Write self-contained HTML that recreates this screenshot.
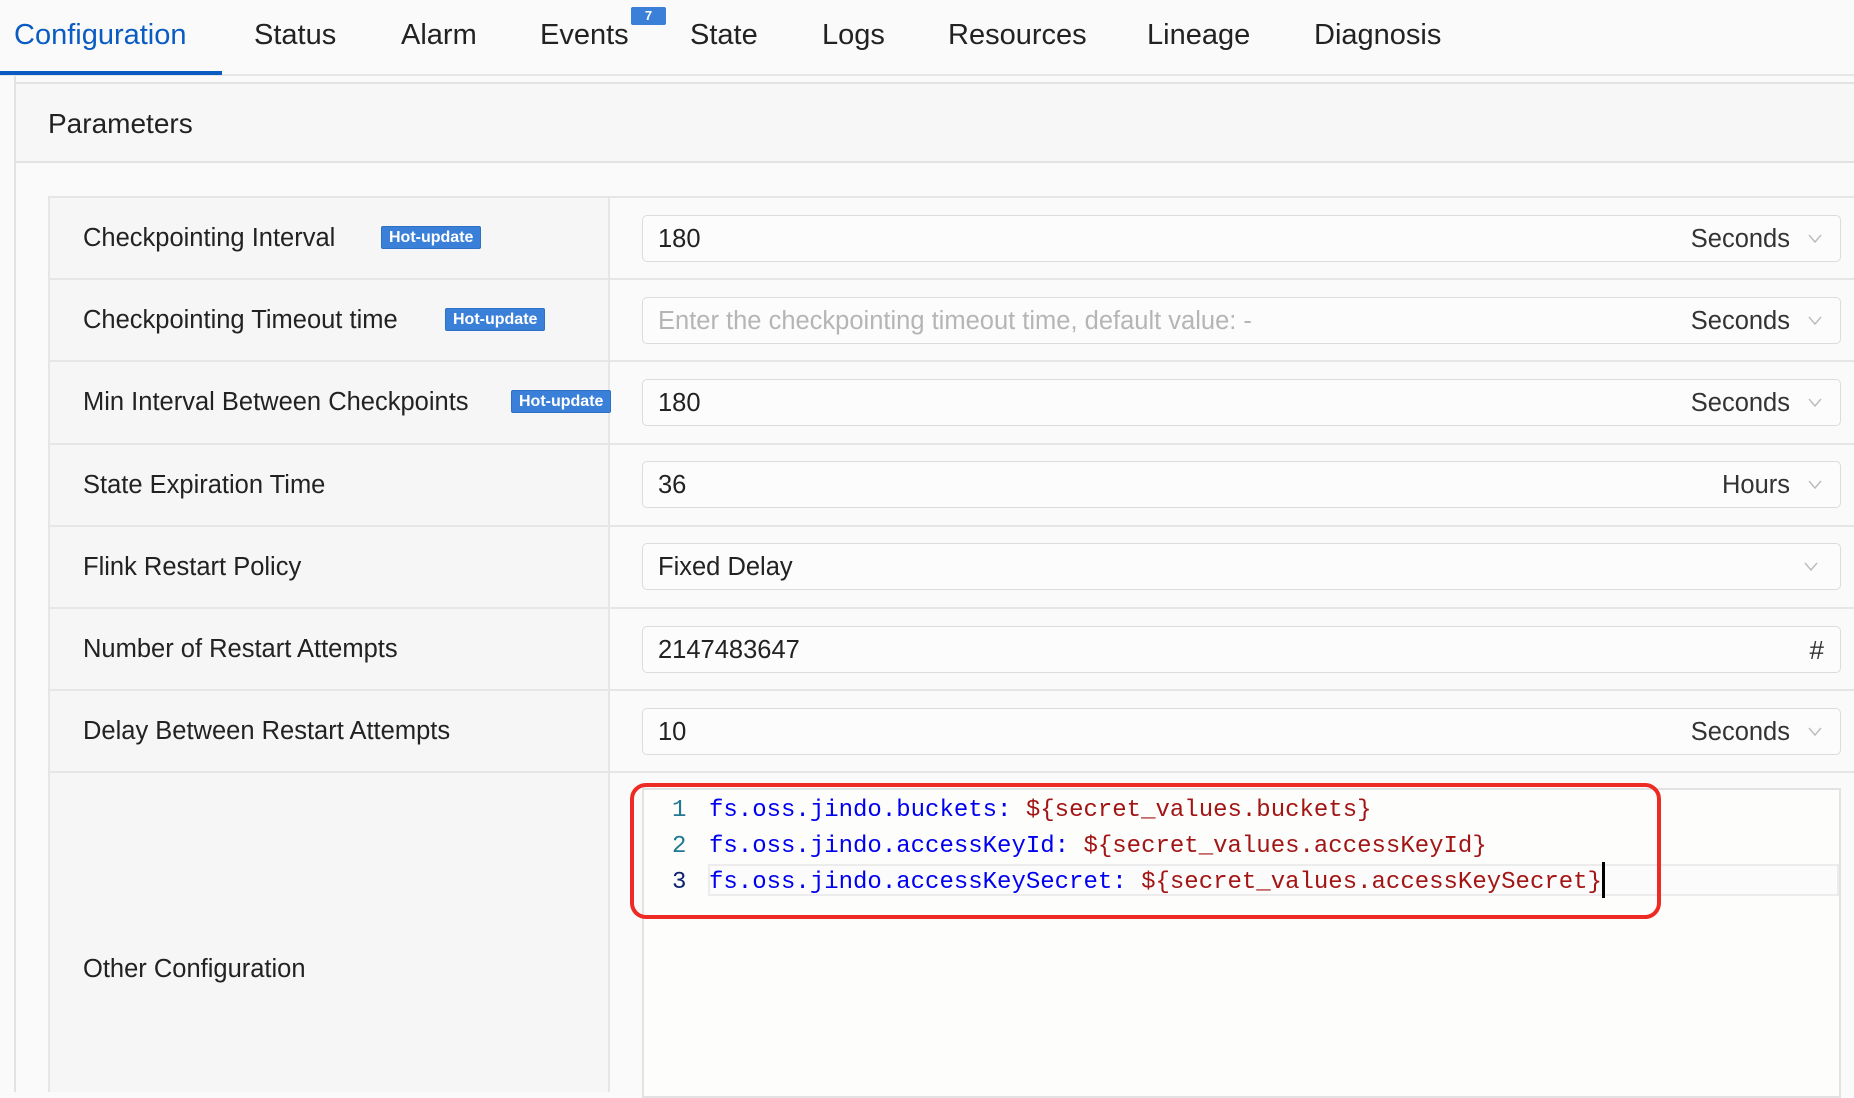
<!DOCTYPE html>
<html><head><meta charset="utf-8"><style>
*{margin:0;padding:0;box-sizing:border-box}
body{width:1854px;height:1092px;overflow:hidden;background:#fafafa;font-family:"Liberation Sans",sans-serif;color:#222;position:relative}
.a{position:absolute}
.tab{position:absolute;top:19px;font-size:29px;color:#222;white-space:nowrap}
.lbl{position:absolute;left:83px;font-size:25.5px;color:#222;white-space:nowrap}
.hu{position:absolute;height:23px;padding:0 7px;background:#3a7fd8;color:#fff;font-size:16px;font-weight:bold;line-height:22px;border-radius:2px;border:1px solid #2f6fc4}
.inp{position:absolute;left:642px;width:1199px;height:47px;border:1.5px solid #dcdcdc;border-radius:5px;background:#fcfcfc;font-size:25.5px;line-height:46px;padding-left:15px;color:#222}
.unit{position:absolute;right:50px;top:0;color:#333}
.chev{position:absolute;right:18px;top:15px;width:14px;height:14px}
.hl{position:absolute;left:48px;width:1806px;height:2px;background:#e6e6e6}
.code{position:absolute;font-family:"Liberation Mono",monospace;font-size:24px;white-space:pre}
.k{color:#0000f0}.v{color:#a31515}.n{color:#237893}
</style></head><body>
<div class="tab" style="left:14px;color:#0a5cc2">Configuration</div>
<div class="tab" style="left:254px">Status</div>
<div class="tab" style="left:401px">Alarm</div>
<div class="tab" style="left:540px">Events</div>
<div class="a" style="left:631px;top:7px;width:35px;height:18px;background:#3a7fd8;color:#fff;font-size:13px;font-weight:bold;text-align:center;line-height:18px;border-radius:2px">7</div>
<div class="tab" style="left:690px">State</div>
<div class="tab" style="left:822px">Logs</div>
<div class="tab" style="left:948px">Resources</div>
<div class="tab" style="left:1147px">Lineage</div>
<div class="tab" style="left:1314px">Diagnosis</div>
<div class="a" style="left:0;top:74px;width:1854px;height:2px;background:#e6e6e6"></div>
<div class="a" style="left:0;top:71px;width:222px;height:4px;background:#0a5cc2"></div>
<div class="a" style="left:14px;top:76px;width:2px;height:1016px;background:#e2e2e2"></div>
<div class="a" style="left:16px;top:82px;width:1838px;height:81px;background:#f7f7f7;border-top:2px solid #e2e2e2;border-bottom:2px solid #e2e2e2"></div>
<div class="a" style="left:48px;top:108px;font-size:28px;color:#222">Parameters</div>
<div class="a" style="left:48px;top:196px;width:562px;height:896px;background:#f6f6f6;border-left:2px solid #e6e6e6;border-right:2px solid #e6e6e6"></div>
<div class="hl" style="top:196px"></div>
<div class="hl" style="top:278px"></div>
<div class="hl" style="top:360px"></div>
<div class="hl" style="top:443px"></div>
<div class="hl" style="top:525px"></div>
<div class="hl" style="top:607px"></div>
<div class="hl" style="top:689px"></div>
<div class="hl" style="top:771px"></div>

<div class="lbl" style="top:224px">Checkpointing Interval</div><div class="hu" style="left:381px;top:226px">Hot-update</div>
<div class="lbl" style="top:306px">Checkpointing Timeout time</div><div class="hu" style="left:445px;top:308px">Hot-update</div>
<div class="lbl" style="top:388px">Min Interval Between Checkpoints</div><div class="hu" style="left:511px;top:390px">Hot-update</div>
<div class="lbl" style="top:471px">State Expiration Time</div>
<div class="lbl" style="top:553px">Flink Restart Policy</div>
<div class="lbl" style="top:635px">Number of Restart Attempts</div>
<div class="lbl" style="top:717px">Delay Between Restart Attempts</div>
<div class="lbl" style="top:955px">Other Configuration</div>

<svg width="0" height="0" style="position:absolute"><defs><symbol id="cv" viewBox="0 0 14 14"><path d="M1 4 L7 11 L13 4" fill="none" stroke="#bbb" stroke-width="1.4"/></symbol></defs></svg>

<div class="inp" style="top:215px">180<span class="unit">Seconds</span><svg class="chev"><use href="#cv"/></svg></div>
<div class="inp" style="top:297px;color:#b5b5b5">Enter the checkpointing timeout time, default value: -<span class="unit">Seconds</span><svg class="chev"><use href="#cv"/></svg></div>
<div class="inp" style="top:379px">180<span class="unit">Seconds</span><svg class="chev"><use href="#cv"/></svg></div>
<div class="inp" style="top:461px">36<span class="unit">Hours</span><svg class="chev"><use href="#cv"/></svg></div>
<div class="inp" style="top:543px">Fixed Delay<svg class="chev" style="right:22px"><use href="#cv"/></svg></div>
<div class="inp" style="top:626px">2147483647<span class="unit" style="right:16px;font-size:26px">#</span></div>
<div class="inp" style="top:708px">10<span class="unit">Seconds</span><svg class="chev"><use href="#cv"/></svg></div>

<div class="a" style="left:642px;top:788px;width:1199px;height:310px;background:#fdfdfc;border:2px solid #e2e2e2"></div>
<div class="a" style="left:708px;top:864px;width:1131px;height:32px;border:2px solid #ececec;background:#fbfbfb"></div>
<div class="code" style="left:672px;top:793px;line-height:36px"><span class="n">1</span></div>
<div class="code" style="left:672px;top:829px;line-height:36px"><span class="n">2</span></div>
<div class="code" style="left:672px;top:865px;line-height:36px"><span class="n" style="color:#0b216f">3</span></div>
<div class="code" style="left:709px;top:793px;line-height:36px"><span class="k">fs.oss.jindo.buckets:</span> <span class="v">${secret_values.buckets}</span>
<span class="k">fs.oss.jindo.accessKeyId:</span> <span class="v">${secret_values.accessKeyId}</span>
<span class="k">fs.oss.jindo.accessKeySecret:</span> <span class="v">${secret_values.accessKeySecret}</span></div>
<div class="a" style="left:1602px;top:862px;width:3px;height:36px;background:#000"></div>
<div class="a" style="left:630px;top:783px;width:1031px;height:136px;border:4px solid #ee2a24;border-radius:16px"></div>
</body></html>
